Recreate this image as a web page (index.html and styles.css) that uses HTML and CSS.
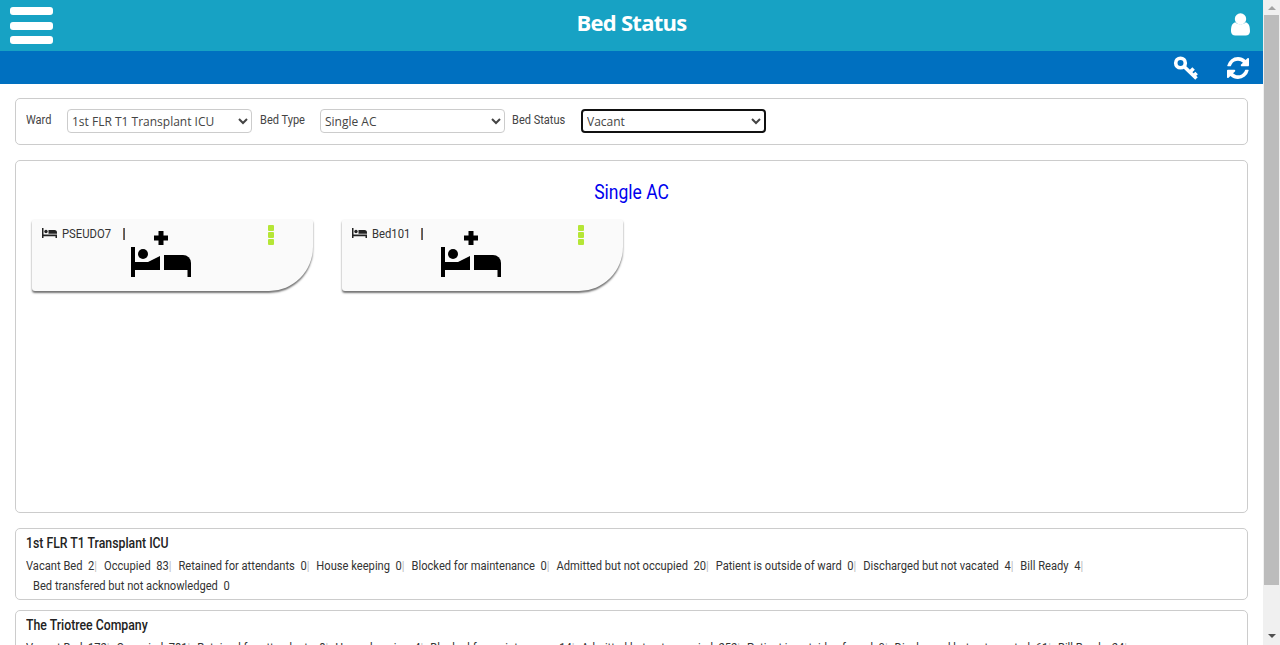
FILE: index.html
```html
<!DOCTYPE html>
<html>
  <head>
    <title>Bed Status</title>
    <meta name="viewport" content="width=device-width, initial-scale=1.0"/>
    <link rel="stylesheet" href="styles.css">
  </head>
  <body>
    <div class="page">
      <header class="topbar">
        <div class="menu-btn"><span></span><span></span><span></span></div>
        <h1>Bed Status</h1>
        <svg class="user-icon" viewBox="0 0 20 24"><circle cx="10" cy="6.2" r="6"/><path d="M0 19c0-5 1-8.500 4.500-9.500 3 3 8 3 11 0C19 10.500 20 14 20 19c0 3-2 4.500-4.500 4.500h-11C2 23.500 0 22 0 19z"/></svg>
      </header>
      <div class="toolbar">
        <svg class="key-icon" viewBox="0 0 26 26"><circle cx="7.500" cy="8" r="4.800"/><path d="M11 11.500L23.500 23.500M17 17l3.600-3.500M20.800 20.800l2.800-2.800"/></svg>
        <svg class="refresh-icon" viewBox="0 0 1536 1536"><path d="M1511 928q0 5-1 7-64 268-268 434.500t-478 166.500q-146 0-282.500-55t-243.500-157l-129 129q-19 19-45 19t-45-19-19-45v-448q0-26 19-45t45-19h448q26 0 45 19t19 45-19 45l-137 137q71 66 161 102t187 36q134 0 250-65t186-179q11-17 53-117 8-23 30-23h192q13 0 22.500 9.500t9.500 22.500zm25-800v448q0 26-19 45t-45 19h-448q-26 0-45-19t-19-45 19-45l138-138q-148-137-349-137-134 0-250 65t-186 179q-11 17-53 117-8 23-30 23h-199q-13 0-22.500-9.500t-9.500-22.500v-7q65-268 270-434.500t480-166.500q146 0 284 55.500t245 156.500l130-129q19-19 45-19t45 19 19 45z"/></svg>
      </div>

      <main class="content">
        <section class="panel filters">
          <label class="filter-label label-ward" for="ward">Ward</label>
          <select id="ward" class="filter-select"><option>1st FLR T1 Transplant ICU</option></select>
          <label class="filter-label label-type" for="type">Bed Type</label>
          <select id="type" class="filter-select"><option>Single AC</option></select>
          <label class="filter-label label-status" for="status">Bed Status</label>
          <select id="status" class="filter-select active"><option>Vacant</option></select>
        </section>

        <section class="panel beds">
          <h2>Single AC</h2>
          <div class="bed-list">
            <div class="bed-card">
              <div class="bed-info">
                <svg class="small-bed" viewBox="0 0 15 10"><path d="M0 0h1.500v6.500H15V10h-1.500V8.300H1.500V10H0z"/><circle cx="4" cy="3.500" r="1.700"/><path d="M6.500 2h6q2.500 0 2.500 2.500v1.200H6.500z"/></svg>
                <span class="bed-name">PSEUDO7</span>
                <span class="bed-sep"></span>
              </div>
              <svg class="bed-big" viewBox="0 0 60 46"><path d="M27.500 0h5v4.500H37v5h-4.500V14h-5V9.500H23v-5h4.500z"/><rect y="16" width="4" height="30"/><circle cx="12" cy="23" r="5"/><rect x="4" y="31" width="25" height="8"/><path d="M17 31l12-6v6z"/><path d="M33 24h19a8 8 0 0 1 8 8v7H33z"/><rect x="56.500" y="39" width="3.500" height="7"/></svg>
              <div class="bed-dots"><span></span><span></span><span></span></div>
            </div>
            <div class="bed-card">
              <div class="bed-info">
                <svg class="small-bed" viewBox="0 0 15 10"><path d="M0 0h1.500v6.500H15V10h-1.500V8.300H1.500V10H0z"/><circle cx="4" cy="3.500" r="1.700"/><path d="M6.500 2h6q2.500 0 2.500 2.500v1.200H6.500z"/></svg>
                <span class="bed-name">Bed101</span>
                <span class="bed-sep"></span>
              </div>
              <svg class="bed-big" viewBox="0 0 60 46"><path d="M27.500 0h5v4.500H37v5h-4.500V14h-5V9.500H23v-5h4.500z"/><rect y="16" width="4" height="30"/><circle cx="12" cy="23" r="5"/><rect x="4" y="31" width="25" height="8"/><path d="M17 31l12-6v6z"/><path d="M33 24h19a8 8 0 0 1 8 8v7H33z"/><rect x="56.500" y="39" width="3.500" height="7"/></svg>
              <div class="bed-dots"><span></span><span></span><span></span></div>
            </div>
          </div>
        </section>

        <section class="panel summary">
          <h3>1st FLR T1 Transplant ICU</h3>
          <div class="counts">
            <span class="count">Vacant Bed&nbsp; 2<i>|</i></span>
            <span class="count">Occupied&nbsp; 83<i>|</i></span>
            <span class="count">Retained for attendants&nbsp; 0<i>|</i></span>
            <span class="count">House keeping&nbsp; 0<i>|</i></span>
            <span class="count">Blocked for maintenance&nbsp; 0<i>|</i></span>
            <span class="count">Admitted but not occupied&nbsp; 20<i>|</i></span>
            <span class="count">Patient is outside of ward&nbsp; 0<i>|</i></span>
            <span class="count">Discharged but not vacated&nbsp; 4<i>|</i></span>
            <span class="count">Bill Ready&nbsp; 4<i>|</i></span>
            <span class="count">Bed transfered but not acknowledged&nbsp; 0</span>
          </div>
        </section>

        <section class="panel summary">
          <h3>The Triotree Company</h3>
          <div class="counts">
            <span class="count">Vacant Bed&nbsp; 172<i>|</i></span>
            <span class="count">Occupied&nbsp; 781<i>|</i></span>
            <span class="count">Retained for attendants&nbsp; 8<i>|</i></span>
            <span class="count">House keeping&nbsp; 4<i>|</i></span>
            <span class="count">Blocked for maintenance&nbsp; 14<i>|</i></span>
            <span class="count">Admitted but not occupied&nbsp; 252<i>|</i></span>
            <span class="count">Patient is outside of ward&nbsp; 0<i>|</i></span>
            <span class="count">Discharged but not vacated&nbsp; 61<i>|</i></span>
            <span class="count">Bill Ready&nbsp; 24<i>|</i></span>
          </div>
        </section>
      </main>
    </div>

    <div class="scrollbar">
      <span class="arrow-up"></span>
      <span class="thumb"></span>
      <span class="arrow-down"></span>
    </div>
  </body>
</html>
```

FILE: styles.css
```css
html, body {
    height: 100%;
}

body {
    margin: 0;
    display: flex;
    overflow: hidden;

    font-family: Roboto, sans-serif;
    font-size: 12px;
    color: #333;
    background: #fff;
}

.page {
    flex: 1;
    min-width: 0;
    height: 645px;
    overflow: hidden;
}

.topbar {
    height: 51px;
    padding: 7px 10px 0 10px;
    box-sizing: border-box;

    display: grid;
    grid-template-columns: 1fr auto 1fr;
    align-items: start;

    background: #17a2c4;
}

.topbar h1 {
    margin: 2px 0 0 0;

    font-family: "Open Sans", sans-serif;
    font-size: 22px;
    font-weight: 700;
    line-height: 26px;
    letter-spacing: -0.75px;
    color: #fff;
}

.menu-btn {
    width: 43px;
}

.menu-btn span {
    display: block;
    height: 8px;
    margin-bottom: 6.5px;
    border-radius: 3px;
    background: #fff;
}

.user-icon {
    width: 19px;
    height: 23px;
    margin: 6px 3px 0 0;
    justify-self: end;
    fill: #fff;
}

.toolbar {
    height: 33px;
    padding-right: 14px;
    box-sizing: border-box;

    display: flex;
    justify-content: flex-end;
    align-items: center;
    gap: 28px;

    background: #0070c0;
}

.key-icon {
    width: 26px;
    height: 26px;
    fill: none;
    stroke: #fff;
    stroke-width: 3.600;
}

.refresh-icon {
    width: 22px;
    height: 22px;
    fill: #fff;
}

.content {
    padding: 14px 15px 0 15px;
}

.panel {
    box-sizing: border-box;
    border: 1px solid #ccc;
    border-radius: 5px;
    background: #fff;
}

.filters {
    height: 47px;
    margin-bottom: 15px;
    padding: 0 0 1px 10px;

    display: flex;
    align-items: center;
}

/* the original labels are a condensed face, Roboto is squeezed to fit */
.filter-label {
    margin-top: -2px;
    color: #444;
    transform: scaleX(0.92);
    transform-origin: left;
}

.label-ward {
    width: 41px;
}

.label-type {
    width: 60px;
    margin-left: 8px;
}

.label-status {
    width: 69px;
    margin-left: 7px;
}

.filter-select {
    box-sizing: border-box;
    width: 185px;
    height: 24px;
    padding: 0;

    border: 1px solid #ccc;
    border-radius: 4px;
    outline: 0;

    font-family: "Open Sans", sans-serif;
    font-size: 12px;
    color: #444;
    background-color: #fff;
}

.filter-select.active {
    border: 2px solid #111;
}

.beds {
    height: 353px;
    margin-bottom: 15px;
    padding: 20px 15px 0 15px;
}

.beds h2 {
    margin: 0 0 15px 0;

    font-size: 20px;
    font-weight: 400;
    line-height: 23px;
    text-align: center;
    color: #0000ee;
    transform: scaleX(0.875);
}

.bed-list {
    padding-left: 1px;

    display: flex;
    gap: 29px;
}

.bed-card {
    width: 281px;
    height: 72px;
    padding: 0 39px 0 10px;
    box-sizing: border-box;

    display: flex;

    border-radius: 3px 3px 44px 3px;
    background: #fafafa;
    box-shadow: 0 2px 2px rgba(0, 0, 0, 0.55);
}

.bed-info {
    width: 89px;
    height: 28px;
    margin-top: 1px;
    flex: none;

    display: flex;
    align-items: center;
}

.small-bed {
    width: 15px;
    height: 10px;
    flex: none;
    margin-top: -2px;
    fill: #222;
}

.bed-name {
    margin-left: 5px;
    flex: none;
    white-space: nowrap;
    transform: scaleX(0.94);
    transform-origin: left;
}

.bed-sep {
    width: 2px;
    height: 12px;
    margin-left: 8.500px;
    flex: none;
    background: linear-gradient(to right, #b06a2c, #2a5a90);
}

.bed-big {
    width: 60px;
    height: 46px;
    margin-top: 12px;
    flex: none;
    fill: #000;
}

.bed-dots {
    margin-left: auto;
    margin-top: 6px;
}

.bed-dots span {
    display: block;
    width: 6px;
    height: 6px;
    margin-bottom: 1px;
    border-radius: 1px;
    background: #b5e636;
}

.summary {
    margin-bottom: 10px;
    padding: 5px 10px 3px 10px;
}

.summary h3 {
    margin: 0 0 4px 0;

    font-size: 14px;
    font-weight: 500;
    line-height: 18px;
    color: #222;
    transform: scaleX(0.877);
    transform-origin: left;
}

.counts {
    width: 107.600%;

    display: flex;
    flex-wrap: wrap;
    line-height: 20px;
    transform: scaleX(0.929);
    transform-origin: left;
}

.count {
    margin-left: 7.500px;
}

.count:first-child {
    margin-left: 0;
}

.count i {
    font-style: normal;
    color: #bbb;
}

.scrollbar {
    width: 17px;
    height: 645px;
    flex: none;

    display: flex;
    flex-direction: column;
    align-items: center;

    background: #f0f0f0;
}

.arrow-up {
    margin: 6px 0 5px 0;
    border: 4px solid transparent;
    border-top: 0;
    border-bottom: 4px solid #a3a3a3;
}

.thumb {
    width: 15px;
    height: 570px;
    background: #bcbcbc;
}

.arrow-down {
    margin-top: auto;
    margin-bottom: 7px;
    border: 4px solid transparent;
    border-bottom: 0;
    border-top: 4px solid #505050;
}
```
